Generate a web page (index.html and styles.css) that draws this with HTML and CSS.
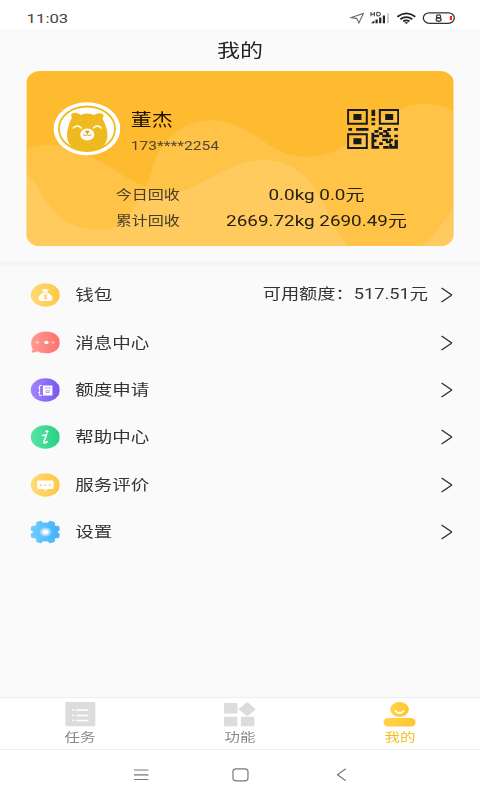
FILE: index.html
```html
<!DOCTYPE html>
<html lang="zh-CN">
<head>
<meta charset="utf-8">
<title>我的</title>
<link rel="stylesheet" href="styles.css">
</head>
<body>
<div class="screen">
  <header class="status">
    <span class="time">11:03</span>
    <svg class="status-icons" viewBox="348 8 110 18" preserveAspectRatio="none">
      <path d="M351 17.5 363 13.5 358.6 23 356.5 18.6Z" fill="none" stroke="#666" stroke-width="1.1"/>
      <path d="M370.7 12v4.3M374 12v4.3M370.7 14.2h3.3M376.5 12.4v3.5h1.5q2.2 0 2.2-1.75t-2.2-1.75z" fill="none" stroke="#333" stroke-width="1"/>
      <path d="M370.5 23.2h3.6v-2.6zM375.2 19.6h2.2v3.6h-2.2zM378.8 17.5h2.2v5.7h-2.2zM382.5 15.4h2.2v7.8h-2.2z" fill="#222"/>
      <path d="M386.7 13.3h2v9.9h-2z" fill="#ccc"/>
      <g fill="none" stroke="#222" stroke-width="1.7"><path d="M397 16.8q9-6.8 18 0M400 19.2q6-4.2 12 0M402.8 21.3q3.200-2 6.400 0"/></g>
      <path d="M403.800 22.200h4.400l-2.200 1.800z" fill="#222"/>
      <rect x="423" y="12.800" width="31" height="10.500" rx="6" ry="5.200" fill="none" stroke="#333" stroke-width="1.300"/>
      <rect x="449.500" y="16" width="2.200" height="4" fill="#f22"/>
      <g fill="none" stroke="#333" stroke-width="1.200"><ellipse cx="438.300" cy="16.400" rx="2.100" ry="1.500"/><ellipse cx="438.300" cy="19.600" rx="2.500" ry="1.700"/></g>
    </svg>
  </header>
  <h1 class="title">我的</h1>
  <section class="card">
    <svg class="waves" viewBox="27 71 426 175" preserveAspectRatio="none">
      <path d="M27 149C46 142 65 144 86 154C110 165 126 179 147 187C154 162 159 144 180 130C196 118 220 117 242 128C266 140 278 157 307 157C346 157 360 129 392 113C412 102 433 101 453 110V246H27Z" fill="#ffc347"/>
      <path d="M27 173C42 190 48 211 68 222C88 233 112 233 125 220C134 211 140 199 145 192C183 197 192 187 214 176C244 160 270 153 294 168C327 190 327 223 348 246H27Z" fill="#ffca5e"/>
      <path d="M422 246Q440 231 453 208V246Z" fill="#ffca5e"/>
    </svg>
    <div class="profile">
      <svg class="avatar" viewBox="53 102 67 54" preserveAspectRatio="none">
        <ellipse cx="86.700" cy="128.800" rx="33.300" ry="26.500" fill="#fff"/>
        <ellipse cx="86.700" cy="128.800" rx="28" ry="22.300" fill="none" stroke="#efba20" stroke-width="1.800"/>
        <path d="M73 148C65 142 66 132 69 124C70 119 73 118 71 116C70 112 78 112 80 115Q87 112 94 115C97 112 105 113 103 117C101 119 104 120 105 125C108 132 109 142 101 148Q87 154 73 148Z" fill="#efba20"/>
        <path d="M73 128q4-4 8 0M93 128q4-4 8 0" fill="none" stroke="#fff" stroke-width="1.400" stroke-linecap="round"/>
        <ellipse cx="87" cy="134.600" rx="7" ry="6" fill="#fff"/>
        <ellipse cx="87" cy="131.800" rx="2.200" ry="1.300" fill="#dca617"/>
        <path d="M87 132v2.500M83 134q1.500 3 4 .5q2.500 2.500 4-.5" fill="none" stroke="#dca617"/>
      </svg>
      <div class="who">
        <div class="name">董杰</div>
        <div class="phone">173****2254</div>
      </div>
      <svg class="qr" viewBox="0 0 156 120" preserveAspectRatio="none" fill="#17191a">
        <g fill="none" stroke="#17191a" stroke-width="6"><path d="M3 3h56v41H3zM98 3h55v41H98zM3 76h56v41H3z"/></g>
        <path d="M19 15h24v18H19zM114 15h24v18h-24zM19 88h24v18H19zM73 2h11v19H73zM73 27h11v8H73zM73 41h11v8H73zM4 57h11v8H4zM27 57h37v8H27z"/>
        <path d="M73 71h8v40h15v8H73zM82 63h12v8H82zM94 55h11v8H94zM81 77h15v8H81zM96 70h11v8H96zM108 63h12v8h-12zM120 57h11v9h-11zM141 57h11v8h-11zM105 77h26v8h-26zM116 70h9v8h-9zM141 77h11v8h-11zM81 91h7v9h-7zM96 100h11v8H96zM105 89h17v7h-17zM116 96h15v7h-15zM126 89h11v8h-11zM108 111h17v8h-17zM126 104h9v15h-9zM142 92h10v27h-19v-8h9z"/>
      </svg>
    </div>
    <dl class="stats">
      <dt>今日回收</dt><dd>0.0kg 0.0元</dd>
      <dt>累计回收</dt><dd>2669.72kg 2690.49元</dd>
    </dl>
  </section>
  <svg width="0" height="0" class="defs">
    <defs>
      <linearGradient id="gold"><stop offset="0" stop-color="#ffda7b"/><stop offset="1" stop-color="#fdc844"/></linearGradient>
      <linearGradient id="red"><stop offset="0" stop-color="#ff9a91"/><stop offset="1" stop-color="#ff706d"/></linearGradient>
      <linearGradient id="purple"><stop offset="0" stop-color="#a185ff"/><stop offset="1" stop-color="#7955ef"/></linearGradient>
      <linearGradient id="green"><stop offset="0" stop-color="#58e5a6"/><stop offset="1" stop-color="#27d083"/></linearGradient>
      <linearGradient id="blue"><stop offset="0" stop-color="#72ccff"/><stop offset="1" stop-color="#40b1fa"/></linearGradient>
      <radialGradient id="glow"><stop offset=".35" stop-color="#fff"/><stop offset=".5" stop-color="#c9ecff"/><stop offset="1" stop-color="#70c8fe"/></radialGradient>
      <linearGradient id="tabgold"><stop offset="0" stop-color="#ffd34c"/><stop offset="1" stop-color="#fdc62f"/></linearGradient>
    </defs>
  </svg>
  <main class="menu">
    <div class="row">
      <svg class="icon" viewBox="0 0 30 24" preserveAspectRatio="none"><ellipse cx="15" cy="12" rx="14.700" ry="11.700" fill="url(#gold)"/><path d="M11.500 6q1.800 1 3.500 0q1.800 1 3.500 0l-1.500 3h-4zM12.700 9.600h4.600Q22 12.500 22 15.500Q22 18 18.500 18h-7Q8 18 8 15.500Q8 12.500 12.700 9.600Z" fill="#fff"/><path d="M17 12.200q-3.500-1-3.500.5t3 1.300q.8 2-3.200 1M15 11v6" fill="none" stroke="#fbcc55" stroke-width=".9"/></svg>
      <span class="label">钱包</span><span class="extra">可用额度：517.51元</span>
      <svg class="chev" viewBox="0 0 12 16" preserveAspectRatio="none"><path d="M.8 1 11 8 .8 15"/></svg>
    </div>
    <div class="row">
      <svg class="icon" viewBox="0 0 30 24" preserveAspectRatio="none"><path d="M15.500 .5C24 .5 29.700 5.500 29.700 11.500S24 22.300 15.500 22.300Q10 22.300 6.500 20.200Q5 22 1.500 21.300Q.8 20.300 2.500 18.500Q.5 15 .8 11.500C1 5.500 7 .5 15.500 .5Z" fill="url(#red)"/><ellipse cx="7" cy="11.500" rx="1.700" ry="1.400" fill="#ffc6c0"/><ellipse cx="16" cy="11.500" rx="2.200" ry="1.700" fill="#fff"/><ellipse cx="22.700" cy="11.500" rx="1.700" ry="1.400" fill="#ffb6b2"/></svg>
      <span class="label">消息中心</span>
      <svg class="chev" viewBox="0 0 12 16" preserveAspectRatio="none"><path d="M.8 1 11 8 .8 15"/></svg>
    </div>
    <div class="row">
      <svg class="icon" viewBox="0 0 30 24" preserveAspectRatio="none"><ellipse cx="15" cy="12" rx="14.700" ry="11.700" fill="url(#purple)"/><path d="M12.500 7.500h9.500v10h-9.500z" fill="#fff"/><path d="M11.500 7.500H9.200v10h2.300M7.700 10h1.500M7.700 14.500h1.500" fill="none" stroke="#fff" stroke-width=".9"/><path d="M14.500 10h6M15.700 12.700h3.200v1.800h-3.200z" fill="none" stroke="#ad96fa" stroke-width=".9"/></svg>
      <span class="label">额度申请</span>
      <svg class="chev" viewBox="0 0 12 16" preserveAspectRatio="none"><path d="M.8 1 11 8 .8 15"/></svg>
    </div>
    <div class="row">
      <svg class="icon" viewBox="0 0 30 24" preserveAspectRatio="none"><ellipse cx="15" cy="12" rx="14.700" ry="11.700" fill="url(#green)"/><ellipse cx="16.500" cy="6.500" rx="1.600" ry="1.200" fill="#fff"/><path d="M12 10.500q2.500 0 4-.7L13.500 16.800q-.6 2.300 3.200 0" fill="none" stroke="#fff" stroke-width="1.600" stroke-linecap="round"/></svg>
      <span class="label">帮助中心</span>
      <svg class="chev" viewBox="0 0 12 16" preserveAspectRatio="none"><path d="M.8 1 11 8 .8 15"/></svg>
    </div>
    <div class="row">
      <svg class="icon" viewBox="0 0 30 24" preserveAspectRatio="none"><ellipse cx="15" cy="12" rx="14.700" ry="11.700" fill="url(#gold)"/><path d="M8 7.500h14q1.200 0 1.200 1v6.500q0 1-1.200 1h-5l-2 2-2-2H8q-1.200 0-1.200-1V8.500q0-1 1.200-1Z" fill="#fff"/><path d="M9.500 11.200h2v1.500h-2zM14 11.200h2v1.500h-2zM18.500 11.200h2v1.500h-2z" fill="#fccb55"/></svg>
      <span class="label">服务评价</span>
      <svg class="chev" viewBox="0 0 12 16" preserveAspectRatio="none"><path d="M.8 1 11 8 .8 15"/></svg>
    </div>
    <div class="row">
      <svg class="icon" viewBox="0 0 30 24" preserveAspectRatio="none"><path d="M10.500 1L12.500 3H17.500L19.500 1L24 2.500V5L25.500 6.300H28.500L29.700 9.700L27.300 11V13L29.700 14.300L28.500 17.700H25.500L24 19V21.500L19.500 23L17.500 21H12.500L10.500 23L6 21.500V19L4.500 17.700H1.500L.3 14.300L2.700 13V11L.3 9.700L1.500 6.300H4.500L6 5V2.500Z" fill="url(#blue)" stroke="url(#blue)" stroke-width=".8" stroke-linejoin="round"/><ellipse cx="15" cy="12" rx="6" ry="4.800" fill="url(#glow)"/></svg>
      <span class="label">设置</span>
      <svg class="chev" viewBox="0 0 12 16" preserveAspectRatio="none"><path d="M.8 1 11 8 .8 15"/></svg>
    </div>
  </main>
  <nav class="tabs">
    <div class="tab">
      <svg viewBox="0 0 34 26" preserveAspectRatio="none"><rect x="2" y="1" width="30" height="24.300" rx="1.500" fill="#dcdcdc"/><path d="M13 9h12M13 14.400h12M13 19.500h12M9 9h2M9 14.400h2M9 19.500h2" stroke="#fff" stroke-width="1.500"/></svg>
      <span>任务</span>
    </div>
    <div class="tab">
      <svg viewBox="0 0 34 26" preserveAspectRatio="none" fill="#dcdcdc"><rect x="1" y="2" width="13.500" height="10.500" rx="1"/><rect x="1" y="15.700" width="13.500" height="9.600" rx="1"/><rect x="18" y="15.700" width="13.500" height="9.600" rx="1"/><path d="M24.300 1 33 8.200 24.300 15.200 15.500 8.200Z"/></svg>
      <span>功能</span>
    </div>
    <div class="tab active">
      <svg viewBox="0 0 34 26" preserveAspectRatio="none" fill="url(#tabgold)"><ellipse cx="17" cy="8.500" rx="9.300" ry="7.600"/><rect x="1" y="17" width="32" height="8.500" rx="4.500" ry="4"/><path d="M12.700 9.800q4.300 4.600 8.600 0" fill="none" stroke="#fff" stroke-width="1.600" stroke-linecap="round"/></svg>
      <span>我的</span>
    </div>
  </nav>
  <footer class="sysnav">
    <svg viewBox="130 760 220 30" preserveAspectRatio="none" fill="none" stroke="#777" stroke-width="1.200"><path d="M133.500 770h14.500M133.500 774.800h14.500M133.500 779.500h14.500"/><rect x="232.500" y="768.800" width="15" height="12" rx="3.500" ry="2.800"/><path d="M345.300 768.800 337 774.800 345.300 780.800"/></svg>
  </footer>
</div>
</body>
</html>
```
FILE: styles.css
```css
* { box-sizing: border-box; }
html, body { margin: 0; width: 480px; height: 800px; overflow: hidden; background: #fafafa; }

/* The layout is 378.947px wide and stretched horizontally to fill the window. */
.screen {
  width: 378.947px;
  height: 800px;
  display: flex;
  flex-direction: column;
  transform: scaleX(1.26667);
  transform-origin: 0 0;
  font-family: Roboto, "Noto Sans CJK SC", sans-serif;
  color: #333;
}
svg { display: block; flex: none; }
.defs { position: absolute; }

.status { height: 29px; flex: none; background: #fff; display: flex; justify-content: space-between; padding: 8px 17.400px 0 21px; }
.time { font-size: 13.200px; line-height: 21px; color: #444; }
.status-icons { width: 86.842px; height: 18px; }

.title { margin: 0; height: 42px; flex: none; text-align: center; font-size: 18.200px; font-weight: 400; line-height: 43px; color: #222; }

.card { position: relative; flex: none; width: 336.300px; height: 175px; margin-left: 21.300px; border-radius: 11px; overflow: hidden; background: #ffbb30; }
.waves { position: absolute; inset: 0; width: 100%; height: 100%; }
.profile { position: relative; display: flex; height: 111px; padding: 31px 42.500px 0 20.500px; }
.avatar { width: 53px; height: 54px; }
.who { flex: 1; padding-left: 8.500px; }
.name { font-size: 16.500px; line-height: 24px; margin-top: 7px; color: #191000; }
.phone { font-size: 12.300px; line-height: 18px; margin-top: 4px; color: #4c4633; }
.qr { width: 41.200px; height: 40px; margin-top: 7px; }
.stats { position: relative; margin: 0; display: grid; grid-template-columns: 51px 190px; column-gap: 12.500px; padding-left: 70px; grid-auto-rows: 26px; line-height: 26px; }
.stats dt { font-size: 12.700px; color: #493e28; white-space: nowrap; }
.stats dd { margin: 0; font-size: 14.900px; text-align: center; color: #262115; white-space: nowrap; }

.menu { flex: 1; margin-top: 15px; padding-top: 5.500px; border-top: 5px solid #f5f5f5; }
.row { display: flex; align-items: center; height: 47.400px; padding: 0 21.500px 0 23.700px; }
.icon { width: 23.700px; height: 24px; }
.label { flex: 1; padding-left: 12px; font-size: 14.600px; line-height: 22px; }
.extra { font-size: 14.400px; line-height: 22px; margin-right: 10px; }
.chev { width: 9.500px; height: 16px; fill: none; stroke: #333; stroke-width: 1.400; }

.tabs { height: 53px; flex: none; background: #fff; border-top: 1px solid #eee; border-bottom: 1px solid #eee; display: flex; }
.tab { flex: 1; display: flex; flex-direction: column; align-items: center; padding-top: 3px; color: #888; font-size: 12.200px; line-height: 22px; }
.tab svg { width: 26.840px; height: 26px; }
.tab.active { color: #f4bd20; }
.sysnav { height: 50px; flex: none; background: #fff; display: flex; justify-content: center; padding-top: 10px; }
.sysnav svg { width: 173.700px; height: 30px; }
```
